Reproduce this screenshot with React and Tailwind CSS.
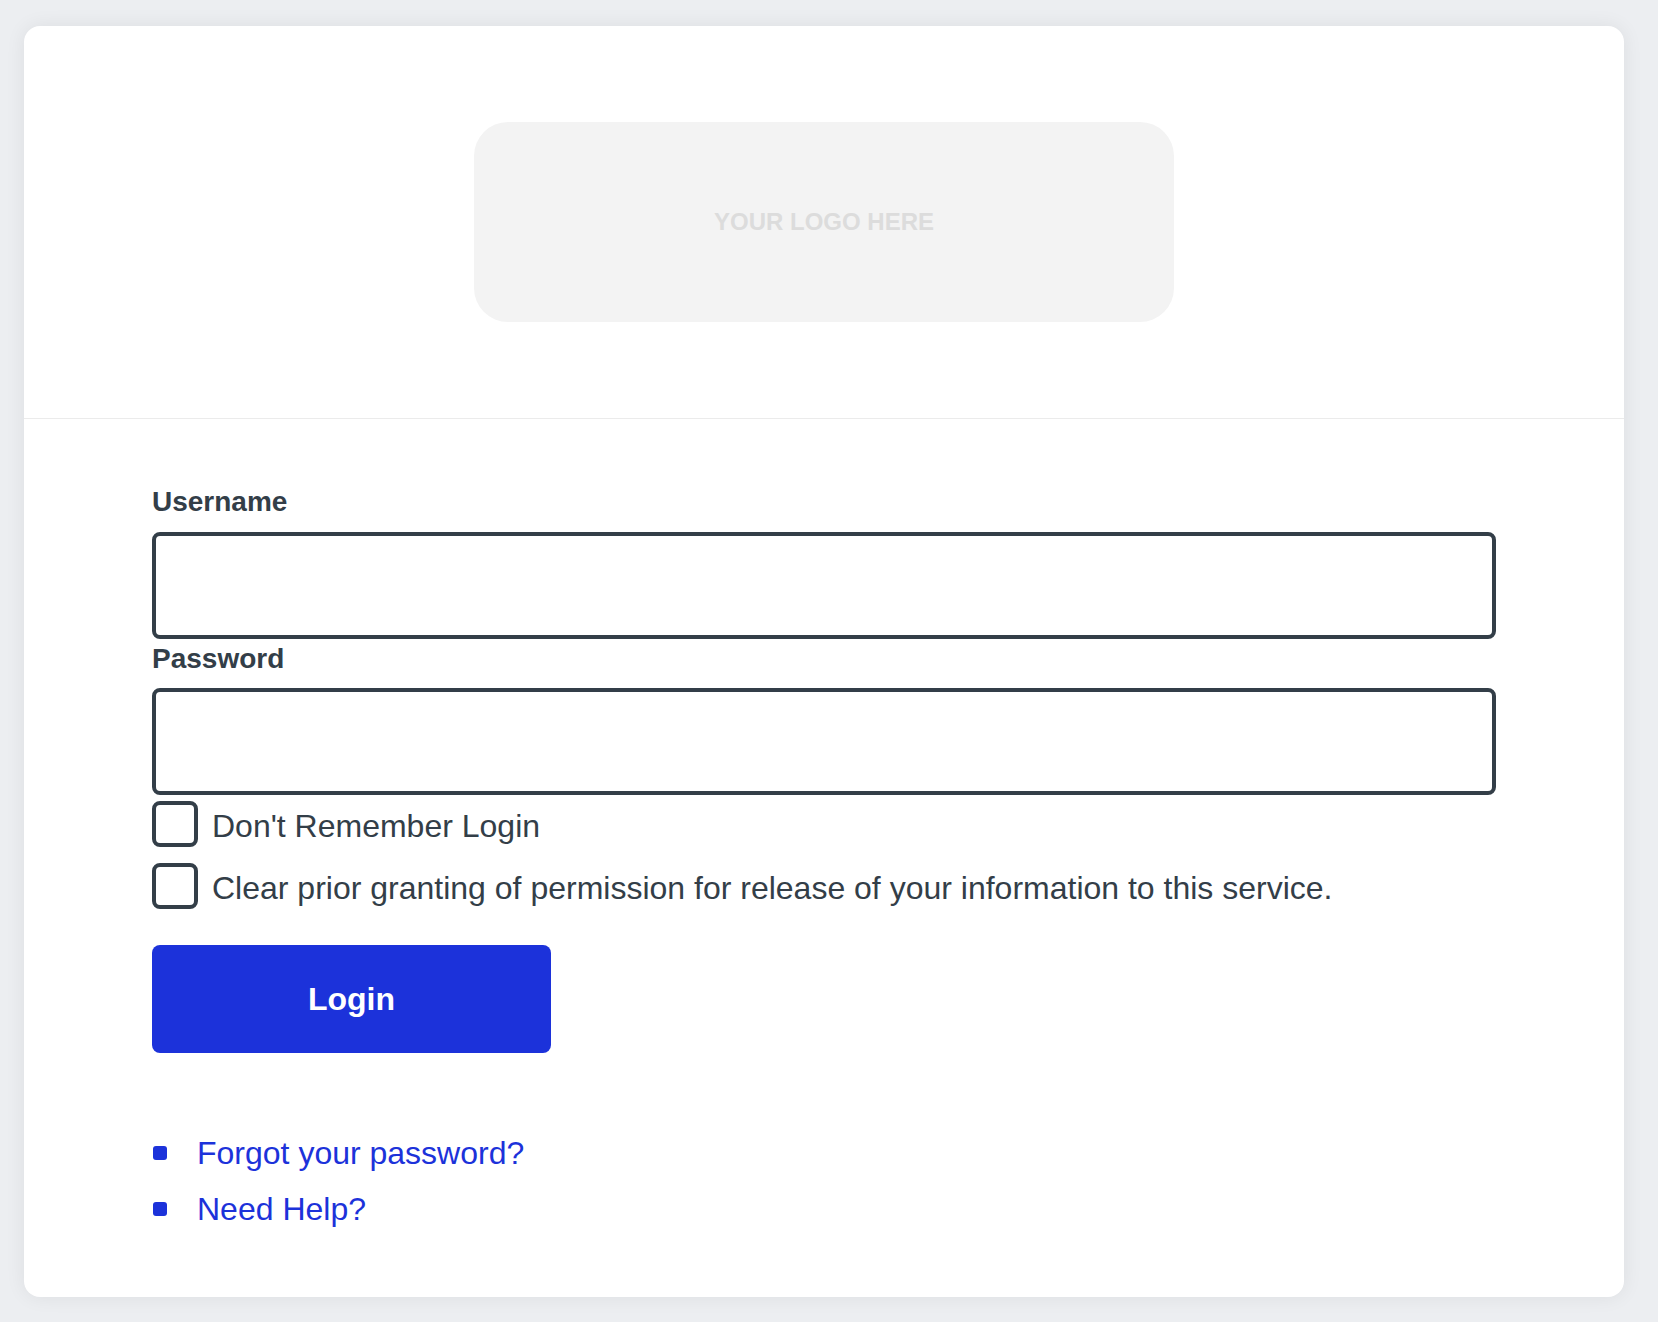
import React from "react";

export default function App() {
  const font = { fontFamily: '"Liberation Sans", Arial, Helvetica, sans-serif' };
  return (
    <div className="min-h-[1322px] w-full bg-[#eceef1] pt-[26px] pb-[26px]" style={font}>
      <div className="ml-[24px] w-[1600px] rounded-[16px] bg-white shadow-[0_0_20px_rgba(0,0,0,0.07)]">
        <div className="flex justify-center py-[96px] border-b border-[#ebebeb]">
          <div className="flex h-[200px] w-[700px] items-center justify-center rounded-[34px] bg-[#f3f3f3]">
            <span className="text-[24px] font-bold text-[#dcdcdc]">YOUR LOGO HERE</span>
          </div>
        </div>
        <div className="px-[128px] pt-[63px] pb-[60px] text-[#333e48]">
          <label className="block text-[28px] font-bold leading-[40px] mb-[10px]">Username</label>
          <input type="text" className="block h-[107px] w-full rounded-[8px] border-4 border-[#333e48] bg-white outline-none" />
          <label className="block text-[28px] font-bold leading-[40px] mb-[9px]">Password</label>
          <input type="password" className="block h-[107px] w-full rounded-[8px] border-4 border-[#333e48] bg-white outline-none" />
          <div className="mt-[6px] flex flex-col gap-[16px]">
            <label className="flex h-[46px] items-start gap-[14px] text-[32px] leading-[46px]">
              <input type="checkbox" className="appearance-none h-[46px] w-[46px] shrink-0 rounded-[8px] border-4 border-[#333e48] bg-white" />
              <span className="pt-[2px]">Don't Remember Login</span>
            </label>
            <label className="flex h-[46px] items-start gap-[14px] text-[32px] leading-[46px]">
              <input type="checkbox" className="appearance-none h-[46px] w-[46px] shrink-0 rounded-[8px] border-4 border-[#333e48] bg-white" />
              <span className="pt-[2px]">Clear prior granting of permission for release of your information to this service.</span>
            </label>
          </div>
          <button className="mt-[36px] flex h-[108px] w-[399px] items-center justify-center rounded-[8px] bg-[#1c32da] text-[32px] font-bold text-white">
            Login
          </button>
          <ul className="mt-[72px] flex flex-col">
            <li className="flex items-center text-[32px] leading-[56px] text-[#1c32da]">
              <span className="ml-[1px] mr-[30px] h-[14px] w-[14px] rounded-[3px] bg-[#1c32da]"></span>
              <a href="#">Forgot your password?</a>
            </li>
            <li className="flex items-center text-[32px] leading-[56px] text-[#1c32da]">
              <span className="ml-[1px] mr-[30px] h-[14px] w-[14px] rounded-[3px] bg-[#1c32da]"></span>
              <a href="#">Need Help?</a>
            </li>
          </ul>
        </div>
      </div>
    </div>
  );
}
